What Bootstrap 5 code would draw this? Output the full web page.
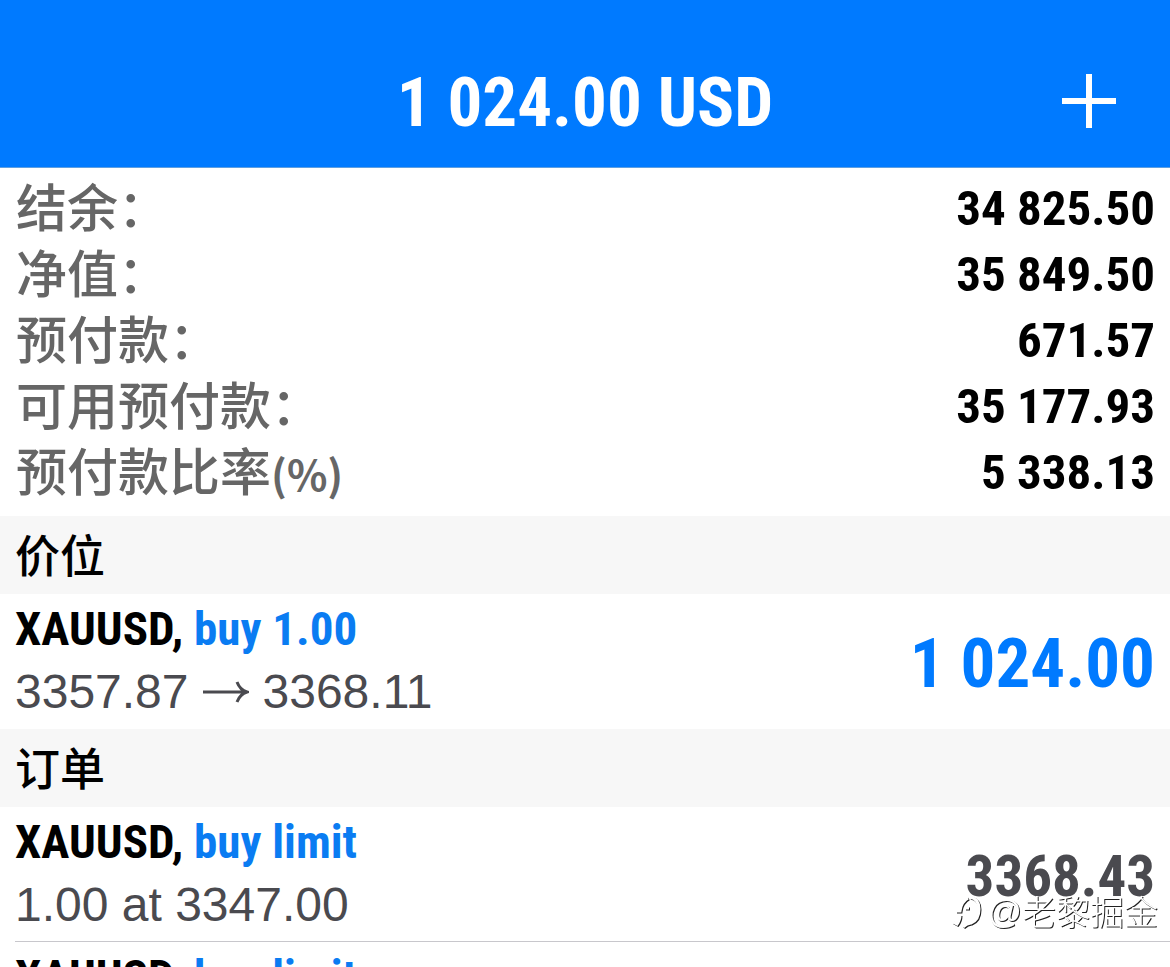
<!DOCTYPE html>
<html lang="zh-CN">
<head>
<meta charset="utf-8">
<meta name="viewport" content="width=device-width, initial-scale=1">
<title>1 024.00 USD</title>
<link href="https://cdn.jsdelivr.net/npm/bootstrap@5.3.0/dist/css/bootstrap.min.css" rel="stylesheet">
<style>
  body { font-family: "Liberation Sans", "Noto Sans CJK SC", sans-serif; color: #000; background: #fff; }
  .figure-text { font-family: "Roboto Condensed", "Liberation Sans", sans-serif; font-weight: 700; }
  .trade-header { background: #007aff; padding: 39px 48px 0; display: grid; grid-template-columns: 1fr auto 1fr; align-items: center; border-bottom: 1px solid #5f9fe0; }
  .trade-title { grid-column: 2; font-size: 69px; line-height: 128px; }
  .add-btn { justify-self: end; width: 66px; height: 66px; margin-bottom: 4px; }
  .summary { padding: 8px 15px 10px 16px; }
  .summary-row { height: 66px; }
  .summary dt { font: 500 51px/58px "Noto Sans CJK SC", sans-serif; color: #666; }
  .summary dt .unit { font-size: 42px; font-weight: 700; }
  .summary dd { font-size: 49px; line-height: 66px; }
  .section-bar { background: #f7f7f7; padding: 0 15px 2px; font: 500 45px/76px "Noto Sans CJK SC", sans-serif; }
  .trade-item { height: 135px; margin-left: 15px; padding-right: 15px; }
  .trade-item + .trade-item { border-top: 1px solid #c8c7cc; margin-top: -1px; }
  .symbol { font-size: 47px; line-height: 60px; padding-top: 5px; }
  .side { color: #0a7cf2; }
  .detail { font-size: 48px; line-height: 66px; color: #4a4a4f; gap: 14px; }
  .profit { font-size: 69px; line-height: 80px; padding-top: 4px; color: #007aff; }
  .price { font-size: 57px; line-height: 80px; padding-top: 4px; color: #4a4a4f; }
  .watermark { right: 12px; bottom: 36px; font: 300 34px/40px "Noto Sans CJK SC", sans-serif; color: #fff; text-shadow: 1px 1px 0 #222; }
  .watermark .at-sign { font-family: "Liberation Sans", sans-serif; }
</style>
</head>
<body>
<div class="vh-100 overflow-hidden">
  <header class="trade-header text-white">
    <h1 class="trade-title figure-text m-0">1 024.00 USD</h1>
    <button type="button" class="add-btn btn p-0 border-0 text-white d-flex align-items-center justify-content-center" aria-label="添加">
      <svg width="54" height="54" viewBox="0 0 54 54" fill="currentColor"><path d="M24 0h6v24h24v6H30v24h-6V30H0v-6h24z"/></svg>
    </button>
  </header>
  <main>
    <dl class="summary m-0">
      <div class="summary-row d-flex justify-content-between"><dt>结余：</dt><dd class="figure-text m-0">34 825.50</dd></div>
      <div class="summary-row d-flex justify-content-between"><dt>净值：</dt><dd class="figure-text m-0">35 849.50</dd></div>
      <div class="summary-row d-flex justify-content-between"><dt>预付款：</dt><dd class="figure-text m-0">671.57</dd></div>
      <div class="summary-row d-flex justify-content-between"><dt>可用预付款：</dt><dd class="figure-text m-0">35 177.93</dd></div>
      <div class="summary-row d-flex justify-content-between"><dt>预付款比率<span class="unit">(%)</span></dt><dd class="figure-text m-0">5 338.13</dd></div>
    </dl>
    <section>
      <h2 class="section-bar m-0">价位</h2>
      <article class="trade-item d-flex justify-content-between align-items-center">
        <div class="align-self-start">
          <div class="symbol figure-text">XAUUSD, <span class="side">buy 1.00</span></div>
          <div class="detail d-flex align-items-center"><span>3357.87</span>
            <svg width="46" height="22" viewBox="0 0 46 22" fill="none" stroke="currentColor" stroke-width="3" role="img" aria-label="至"><path d="M0 11h44M34 1q3 8 10 10q-7 2-10 10"/></svg>
            <span>3368.11</span></div>
        </div>
        <div class="profit figure-text">1 024.00</div>
      </article>
    </section>
    <section>
      <h2 class="section-bar m-0">订单</h2>
      <article class="trade-item d-flex justify-content-between align-items-center">
        <div class="align-self-start">
          <div class="symbol figure-text">XAUUSD, <span class="side">buy limit</span></div>
          <div class="detail">1.00 at 3347.00</div>
        </div>
        <div class="price figure-text">3368.43</div>
      </article>
      <article class="trade-item d-flex justify-content-between align-items-center">
        <div class="align-self-start">
          <div class="symbol figure-text">XAUUSD, <span class="side">buy limit</span></div>
        </div>
      </article>
    </section>
  </main>
</div>
<div class="watermark position-fixed d-flex align-items-center">
  <svg width="36" height="40" viewBox="0 0 36 40" fill="none" aria-hidden="true">
    <path d="M3 32l4 2q3-4 3-9M6 21h4q1-9 8-13M20 7q9 2 9 12q0 11-8 14q-4 0-8 4M15 18h4" stroke="#222" stroke-width="3"/>
    <path d="M2 31l4 2q3-4 3-9M5 20h4q1-9 8-13M19 6q9 2 9 12q0 11-8 14q-4 0-8 4M14 17h4" stroke="#fff" stroke-width="3"/>
  </svg>
  <span class="at-sign">@</span><span>老黎掘金</span>
</div>
<script src="https://cdn.jsdelivr.net/npm/bootstrap@5.3.0/dist/js/bootstrap.bundle.min.js"></script>
</body>
</html>
